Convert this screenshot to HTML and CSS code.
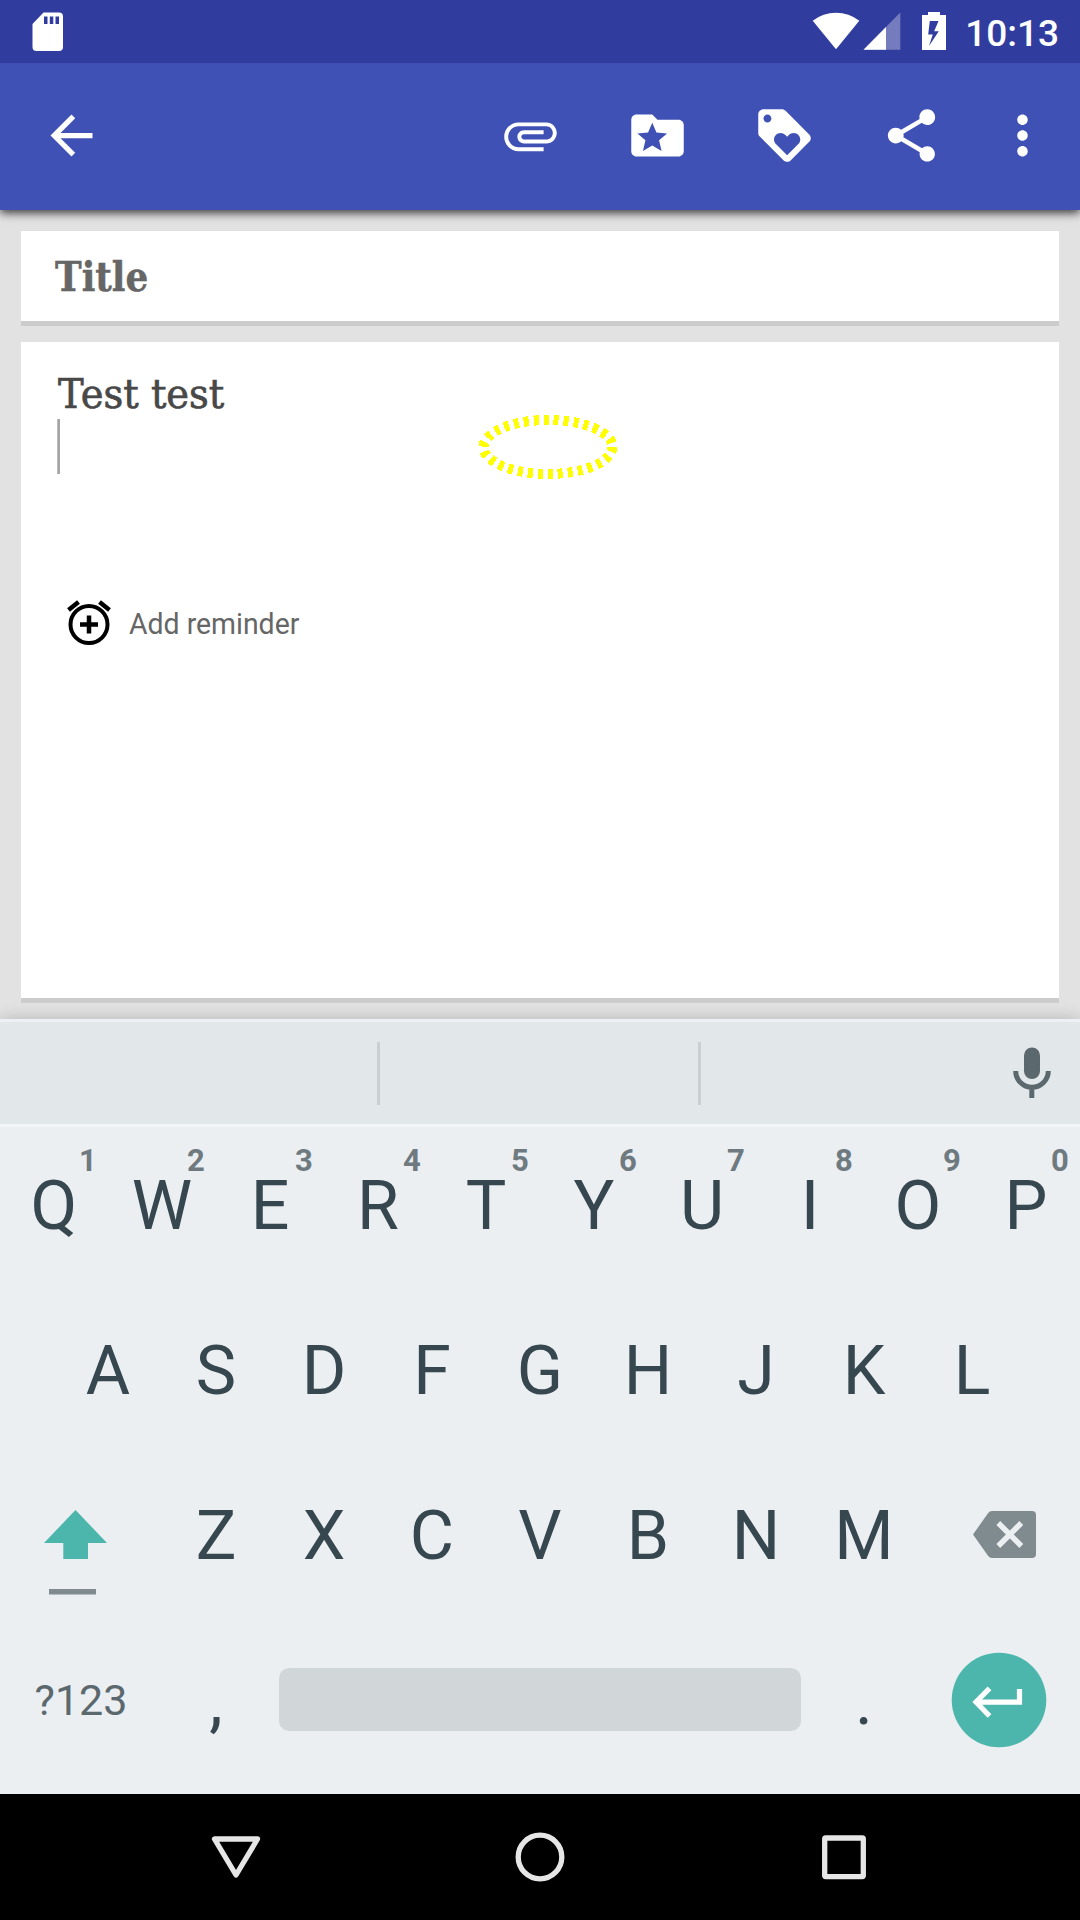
FILE: index.html
```html
<!DOCTYPE html>
<html lang="en">
<head>
<meta charset="utf-8">
<title>Note editor</title>
<link rel="stylesheet" href="styles.css">
</head>
<body>
<div class="screen">
  <header class="status">
    <svg class="sd" width="32" height="40" viewBox="0 0 32 40"><path fill="#fff" fill-rule="evenodd" d="M11.500 .5H27a4 4 0 0 1 4 4V35a4 4 0 0 1-4 4H4.500a4 4 0 0 1-4-4V12zM12 4.500v7.500h3.500V4.500zM17.800 4.500v7.500h3.500V4.500zM23.500 4.500v7.500h3.500V4.500z"/></svg>
    <div class="status-right">
      <svg width="135" height="40" viewBox="812 12 135 40">
        <path fill="#fff" d="M812.700 20.800Q823 12.800 836 12.800T859.300 20.800L836 49.300z"/>
        <path fill="#fff" fill-opacity=".33" d="M900.300 12.500V49.700H863.500z"/>
        <path fill="#fff" d="M886 27V49.700H863.500z"/>
        <path fill="#fff" fill-rule="evenodd" d="M928 12h12v3h6v35h-24V15h6zM929.800 21l-1.600 13.500h4.600L929 46l9.800-14.800h-4.600L938.500 21z"/>
      </svg>
      <span class="clock">10:13</span>
    </div>
  </header>

  <nav class="appbar">
    <svg class="icon" viewBox="0 0 24 24"><path d="M20 11H7.830l5.590-5.590L12 4l-8 8 8 8 1.410-1.410L7.830 13H20v-2z"/></svg>
    <div class="actions">
      <svg class="icon" viewBox="0 0 24 24"><path d="M7.500 18C4.460 18 2 15.540 2 12.500S4.460 7 7.500 7H18c2.210 0 4 1.790 4 4s-1.790 4-4 4H9.500C8.120 15 7 13.880 7 12.500S8.120 10 9.500 10H17v1.500H9.500c-.55 0-1 .45-1 1s.45 1 1 1H18c1.380 0 2.500-1.120 2.500-2.500S19.380 8.500 18 8.500H7.500c-2.210 0-4 1.790-4 4s1.790 4 4 4H17V18H7.500z"/></svg>
      <svg class="icon" viewBox="0 0 24 24"><path fill-rule="evenodd" d="M20 6h-8l-2-2H4c-1.100 0-1.990.9-1.990 2L2 18c0 1.100.9 2 2 2h16c1.100 0 2-.9 2-2V8c0-1.100-.9-2-2-2zM10 7.100l1.600 3.750 4.050.35-3.050 2.650.95 4.050L10 15.800l-3.550 2.100.95-4.050L4.350 11.200l4.050-.35z"/></svg>
      <svg class="icon" viewBox="0 0 24 24"><path d="M21.410 11.580l-9-9C12.050 2.220 11.550 2 11 2H4c-1.100 0-2 .9-2 2v7c0 .55.22 1.050.59 1.420l9 9c.36.36.86.58 1.410.58s1.050-.22 1.410-.59l7-7c.37-.36.59-.86.59-1.410s-.23-1.060-.59-1.420zM5.500 7C4.670 7 4 6.330 4 5.500S4.670 4 5.500 4 7 4.670 7 5.500 6.330 7 5.500 7zm11.770 8.270L13 19.540l-4.270-4.270C8.280 14.810 8 14.190 8 13.500c0-1.380 1.120-2.500 2.500-2.500.69 0 1.320.28 1.770.74l.73.72.73-.73c.45-.45 1.080-.73 1.770-.73 1.380 0 2.500 1.120 2.500 2.500 0 .69-.28 1.320-.73 1.770z"/></svg>
      <svg class="icon" viewBox="0 0 24 24"><path d="M18 16.080c-.76 0-1.440.3-1.960.77L8.910 12.700c.05-.23.09-.46.09-.7s-.04-.47-.09-.7l7.050-4.110c.54.5 1.250.81 2.040.81 1.660 0 3-1.340 3-3s-1.340-3-3-3-3 1.340-3 3c0 .24.04.47.09.7L8.040 9.810C7.500 9.310 6.790 9 6 9c-1.660 0-3 1.340-3 3s1.340 3 3 3c.79 0 1.500-.31 2.040-.81l7.120 4.160c-.05.21-.08.43-.08.65 0 1.610 1.310 2.920 2.920 2.920s2.920-1.310 2.920-2.920-1.310-2.920-2.920-2.920z"/></svg>
    </div>
    <svg class="icon more" viewBox="0 0 24 24"><path d="M12 8c1.100 0 2-.9 2-2s-.9-2-2-2-2 .9-2 2 .9 2 2 2zm0 2c-1.100 0-2 .9-2 2s.9 2 2 2 2-.9 2-2-.9-2-2-2zm0 6c-1.100 0-2 .9-2 2s.9 2 2 2 2-.9 2-2-.9-2-2-2z"/></svg>
  </nav>

  <main class="editor">
    <section class="card title-card"><span class="title">Title</span></section>
    <section class="card body-card">
      <div class="note">Test test</div>
      <div class="caret"></div>
      <div class="reminder">
        <svg width="46" height="48" viewBox="0 0 46 48" fill="none" stroke="#000" stroke-width="4"><circle cx="23" cy="25.500" r="18.500"/><path stroke-width="4.500" d="M14 25.500h18M23 16.500v18M2.500 11l10-8M43.500 11l-10-8"/></svg>
        <span class="reminder-text">Add reminder</span>
      </div>
      <svg class="sketch" width="144" height="70" viewBox="-72 -35 144 70" shape-rendering="crispEdges"><ellipse rx="64.500" ry="27" fill="none" stroke="#ff0" stroke-width="10" stroke-dasharray="5 5"/></svg>
    </section>
  </main>

  <section class="keyboard">
    <div class="suggestions">
      <div class="slot first"></div>
      <div class="slot second"></div>
      <svg class="mic" width="44" height="56" viewBox="1010 1045 44 56"><rect x="1024" y="1047.500" width="16" height="31.500" rx="8" fill="#5b686e"/><path d="M1015.700 1071a16.300 16.300 0 0 0 32.600 0M1031.800 1087v11" fill="none" stroke="#5b686e" stroke-width="5"/></svg>
    </div>
    <div class="keys">
      <div class="row">
        <div class="key">Q<span class="hint">1</span></div><div class="key">W<span class="hint">2</span></div><div class="key">E<span class="hint">3</span></div><div class="key">R<span class="hint">4</span></div><div class="key">T<span class="hint">5</span></div><div class="key">Y<span class="hint">6</span></div><div class="key">U<span class="hint">7</span></div><div class="key">I<span class="hint">8</span></div><div class="key">O<span class="hint">9</span></div><div class="key">P<span class="hint">0</span></div>
      </div>
      <div class="row">
        <div class="key">A</div><div class="key">S</div><div class="key">D</div><div class="key">F</div><div class="key">G</div><div class="key">H</div><div class="key">J</div><div class="key">K</div><div class="key">L</div>
      </div>
      <div class="row">
        <svg width="162" height="165" viewBox="0 1454 162 165"><path fill="#4db6ac" d="M75.500 1510L107 1543H88v16H63.300v-16H44z"/><path fill="#808b90" d="M49 1589h47v5.500H49z"/></svg>
        <div class="key">Z</div><div class="key">X</div><div class="key">C</div><div class="key">V</div><div class="key">B</div><div class="key">N</div><div class="key">M</div>
        <svg width="162" height="165" viewBox="918 1454 162 165"><path fill="#808b90" d="M992 1511h40a4 4 0 0 1 4 4v39a4 4 0 0 1-4 4h-40q-2.500 0-4-2.200l-15-21.300 15-21.300q1.500-2.200 4-2.200z"/><path d="M998.300 1523l23 23M1021.300 1523l-23 23" stroke="#ebeff2" stroke-width="5.500"/></svg>
      </div>
      <div class="row">
        <div class="key symbols">?123</div>
        <div class="key">,</div>
        <div class="space"></div>
        <div class="key">.</div>
        <svg width="162" height="165" viewBox="918 1619 162 165"><circle cx="999" cy="1700" r="47.300" fill="#4db6ac"/><path d="M1019.500 1689v13.200H977M989.500 1688.300l-13.500 13.700 13.500 14" fill="none" stroke="#fff" stroke-width="5.200"/></svg>
      </div>
    </div>
  </section>

  <footer class="navbar">
    <svg width="60" height="60" viewBox="206 1827 60 60"><path d="M214.500 1839h43L236 1875z"/></svg>
    <svg width="60" height="60" viewBox="510 1827 60 60"><circle cx="540" cy="1857" r="21.800"/></svg>
    <svg width="60" height="60" viewBox="814 1827 60 60"><rect x="824.700" y="1838" width="38.600" height="38.600" rx="1"/></svg>
  </footer>
</div>
</body>
</html>
```
FILE: styles.css
```css
* { box-sizing: border-box; }
body { margin: 0; font-family: Roboto, "Liberation Sans", sans-serif; }
svg { display: block; flex: none; }
.screen { width: 1080px; height: 1920px; display: flex; flex-direction: column; background: #e2e2e2; overflow: hidden; }

.status { height: 63px; flex: none; background: #303d9e; display: flex; justify-content: space-between; padding: 12px 21px 0 32px; position: relative; z-index: 2; }
.status-right { display: flex; gap: 18px; }
.clock { color: #fff; font-size: 37px; font-weight: 500; line-height: 43px; }

.appbar { height: 147px; flex: none; background: #3f51b5; display: flex; align-items: center; padding: 0 26px 2px 40px; position: relative; z-index: 1; box-shadow: 0 3px 9px rgba(0, 0, 0, .75); }
.icon { width: 63px; height: 63px; fill: #fff; }
.actions { display: flex; gap: 64px; margin-left: auto; }
.more { margin-left: 48px; }

.editor { height: 809px; flex: none; padding: 21px 21px 0; display: flex; flex-direction: column; gap: 16px; }
.card { background: #fff; border-bottom: 5px solid #ccc; }
.title-card { height: 95px; padding: 22px 34px; }
.title { display: inline-block; transform-origin: left; font: bold 40.5px/48px "Roboto Slab", "DejaVu Serif", serif; color: #666; -webkit-text-stroke: .5px #666; transform: scaleX(.885); }
.body-card { height: 661px; position: relative; padding: 28px 36px; }
.note { font: 40.500px/49px "Roboto Slab", "DejaVu Serif", serif; color: #484848; -webkit-text-stroke: .7px #484848; transform: scaleX(.95); transform-origin: left; width: 400px; margin-left: 1px; }
.caret { width: 3px; height: 55px; background: #bababa; border-right: 2px solid #a5a5a5; }
.reminder { display: flex; align-items: center; margin-top: 125px; margin-left: 8.500px; gap: 17px; }
.reminder-text { font-size: 29px; color: #666; padding-top: 2px; transform: scaleX(.98); transform-origin: left; }
.sketch { position: absolute; left: 455px; top: 70px; }

.keyboard { height: 775px; flex: none; display: flex; flex-direction: column; box-shadow: 0 0 16px rgba(0, 0, 0, .2); }
.suggestions { height: 105px; background: #e2e7ea; border-top: 3px solid #eef1f3; display: flex; align-items: flex-start; padding-top: 20px; }
.slot { height: 63px; border-right: 3px solid #cacfd2; }
.first { width: 380px; }
.second { width: 321px; }
.mic { margin-left: 309px; margin-top: 3px; }
.keys { height: 670px; background: #ebeff2; box-shadow: inset 0 3px #f3f6f8; }
.row { display: flex; justify-content: center; height: 165px; }
.key { width: 108px; position: relative; text-align: center; font-size: 68px; line-height: 165px; color: #37474f; }
.hint { position: absolute; left: 68px; width: 40px; top: 19px; font-size: 31px; line-height: 36px; font-weight: 700; color: #6e7a80; }
.symbols { width: 162px; font-size: 43px; line-height: 163px; color: #5b686e; }
.space { width: 522px; height: 63px; margin: 49px 9px 0; border-radius: 10px; background: #d1d6d9; }

.navbar { height: 126px; flex: none; background: #000; display: flex; justify-content: center; gap: 244px; padding-top: 33px; fill: none; stroke: #e6e6e6; stroke-width: 5.300px; stroke-linejoin: round; }
```
